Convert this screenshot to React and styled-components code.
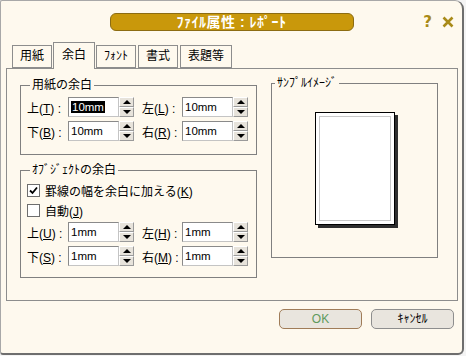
import React from "react";
import styled, { createGlobalStyle } from "styled-components";

const Global = createGlobalStyle`
  html, body { margin: 0; padding: 0; background: #f4f4f4; }
  body { font-family: "Liberation Sans", "Noto Sans CJK JP", sans-serif; font-size: 12px; color: #000; }
`;

const Window = styled.div`
  box-sizing: border-box;
  width: 464px;
  height: 355px;
  background: #fef9ee;
  border-top: 1px solid #a8a8a8;
  border-left: 1px solid #a8a8a8;
  border-right: 2px solid #6e6e6e;
  border-bottom: 2px solid #6e6e6e;
  border-radius: 2px 9px 6px 3px;
  display: flex;
  flex-direction: column;
`;

const TitleBar = styled.div`
  display: grid;
  grid-template-columns: 1fr 244px 1fr;
  align-items: center;
  height: 41px;
`;

const TitlePill = styled.div`
  grid-column: 2;
  box-sizing: border-box;
  height: 18px;
  margin-top: 1px;
  border: 1px solid #8c6c12;
  border-radius: 6px;
  background: #c9980b;
  color: #fff;
  font-weight: bold;
  font-size: 14px;
  line-height: 16px;
  text-align: center;
  letter-spacing: 0.5px;
`;

const TitleIcons = styled.div`
  justify-self: end;
  display: flex;
  align-items: center;
  gap: 10px;
  margin-right: 8px;
  margin-top: 1px;
`;

const Help = styled.span`
  font-family: "DejaVu Sans", sans-serif;
  font-weight: bold;
  font-size: 15px;
  color: #a88a18;
  line-height: 16px;
`;

const TabRow = styled.div`
  display: flex;
  align-items: flex-end;
  gap: 2px;
  height: 26px;
  padding-left: 11px;
  position: relative;
  z-index: 1;
`;

const Tab = styled.div`
  box-sizing: border-box;
  height: ${(p) => (p.active ? "27px" : "23px")};
  padding: 0 ${(p) => (p.active ? "8px" : "7px")};
  margin: 0 ${(p) => (p.active ? "-1px" : "0")};
  margin-bottom: ${(p) => (p.active ? "-1px" : "0")};
  border: 1px solid #8d8d8d;
  border-bottom: ${(p) => (p.active ? "none" : "1px solid #8d8d8d")};
  background: #fef9ee;
  line-height: ${(p) => (p.active ? "24px" : "21px")};
  font-size: 12px;
`;

const Panel = styled.div`
  box-sizing: border-box;
  margin-left: 5px;
  width: 452px;
  height: 233px;
  border: 1px solid #8d8d8d;
  display: grid;
  grid-template-columns: 237px 167px;
  column-gap: 14px;
  align-items: start;
  padding: 7px 0 0 13px;
`;

const LeftCol = styled.div`
  display: flex;
  flex-direction: column;
  gap: 8px;
  margin-top: 2px;
`;

const Group = styled.fieldset`
  box-sizing: border-box;
  margin: 0;
  min-width: 0;
  border: 1px solid #808080;
  padding: 5px 0 ${(p) => p.pb || 13}px 6px;
  display: flex;
  flex-direction: column;
  gap: 4px;
`;

const Legend = styled.legend`
  padding: 0 2px;
  margin-left: 3px;
  font-size: 12px;
  line-height: 14px;
`;

const SpinRow = styled.div`
  display: grid;
  grid-template-columns: 41px 51px 15px 48px 51px 15px;
  align-items: center;
  height: 20px;
`;

const Label = styled.span`
  font-size: 12px;
  white-space: nowrap;
  padding-left: ${(p) => (p.second ? "8px" : "0")};
`;

const Key = styled.span`
  font-family: "Liberation Sans", sans-serif;
  u { text-decoration: underline; }
`;

const Field = styled.div`
  box-sizing: border-box;
  height: 20px;
  background: #fff;
  border: 1px solid #8a8a8a;
  border-right-color: #c4c4c4;
  border-bottom-color: #c4c4c4;
  font-size: 11.5px;
  line-height: 18px;
  padding-left: 2px;
`;

const Sel = styled.span`
  background: #000;
  color: #fff;
  padding: 0 1px;
`;

const Spinner = styled.div`
  display: flex;
  flex-direction: column;
  height: 20px;
`;

const SpinBtn = styled.div`
  box-sizing: border-box;
  height: 10px;
  background: #e7e3db;
  border: 1px solid #fff;
  border-right-color: #9a9a9a;
  border-bottom-color: #9a9a9a;
  display: flex;
  align-items: center;
  justify-content: center;
  &::after {
    content: "";
    width: 0;
    height: 0;
    border-left: 4px solid transparent;
    border-right: 4px solid transparent;
    ${(p) => (p.down ? "border-top: 4px solid #000;" : "border-bottom: 4px solid #000;")}
  }
`;

const CheckRow = styled.label`
  display: flex;
  align-items: center;
  gap: 5px;
  height: 16px;
  font-size: 12px;
`;

const Box = styled.span`
  box-sizing: border-box;
  width: 13px;
  height: 13px;
  background: #fff;
  border: 1px solid #6e6e6e;
  display: flex;
  align-items: center;
  justify-content: center;
`;

const SampleGroup = styled(Group)`
  height: 182px;
  padding: 0;
`;

const PreviewArea = styled.div`
  flex: 1;
  display: flex;
  align-items: center;
  justify-content: center;
  padding-bottom: 10px;
`;

const Page = styled.div`
  box-sizing: border-box;
  width: 80px;
  height: 113px;
  background: #fff;
  border: 1px solid #000;
  box-shadow: 3px 3px 0 #2e2e2e;
  padding: 3px;
`;

const PageInner = styled.div`
  box-sizing: border-box;
  height: 100%;
  border: 1px solid #c8c8c8;
`;

const ButtonRow = styled.div`
  display: flex;
  justify-content: flex-end;
  gap: 9px;
  margin-top: 8px;
  padding-right: 8px;
`;

const Button = styled.div`
  box-sizing: border-box;
  width: 83px;
  height: 20px;
  border-radius: 5px;
  background: #e9e5de;
  border: 1px solid ${(p) => (p.primary ? "#a07c58" : "#8e8e8e")};
  color: ${(p) => (p.primary ? "#5f9a5c" : "#000")};
  font-size: 12px;
  line-height: 18px;
  text-align: center;
`;

function Spin() {
  return (
    <Spinner>
      <SpinBtn />
      <SpinBtn down />
    </Spinner>
  );
}

function Access({ k }) {
  return (
    <Key>
      (<u>{k}</u>)
    </Key>
  );
}

function Row({ l1, k1, v1, l2, k2, v2, selected }) {
  return (
    <SpinRow>
      <Label>
        {l1}
        <Access k={k1} /> :
      </Label>
      <Field>{selected ? <Sel>{v1}</Sel> : v1}</Field>
      <Spin />
      <Label second>
        {l2}
        <Access k={k2} /> :
      </Label>
      <Field>{v2}</Field>
      <Spin />
    </SpinRow>
  );
}

export default function App() {
  return (
    <>
      <Global />
      <Window>
        <TitleBar>
          <TitlePill>ﾌｧｲﾙ属性 : ﾚﾎﾟｰﾄ</TitlePill>
          <TitleIcons>
            <Help>?</Help>
            <svg width="12" height="12" viewBox="0 0 12 12">
              <path d="M1.5 1.5 L10.5 10.5 M10.5 1.5 L1.5 10.5" stroke="#a88a18" strokeWidth="2.6" />
            </svg>
          </TitleIcons>
        </TitleBar>
        <TabRow>
          <Tab>用紙</Tab>
          <Tab active>余白</Tab>
          <Tab>ﾌｫﾝﾄ</Tab>
          <Tab>書式</Tab>
          <Tab>表題等</Tab>
        </TabRow>
        <Panel>
          <LeftCol>
            <Group>
              <Legend>用紙の余白</Legend>
              <Row l1="上" k1="T" v1="10mm" l2="左" k2="L" v2="10mm" selected />
              <Row l1="下" k1="B" v1="10mm" l2="右" k2="R" v2="10mm" />
            </Group>
            <Group pb={11}>
              <Legend>ｵﾌﾞｼﾞｪｸﾄの余白</Legend>
              <CheckRow>
                <Box>
                  <svg width="9" height="9" viewBox="0 0 9 9">
                    <path d="M1 4.5 L3.5 7 L8 1.5" stroke="#000" strokeWidth="1.8" fill="none" />
                  </svg>
                </Box>
                <span>
                  罫線の幅を余白に加える
                  <Access k="K" />
                </span>
              </CheckRow>
              <CheckRow>
                <Box />
                <span>
                  自動
                  <Access k="J" />
                </span>
              </CheckRow>
              <Row l1="上" k1="U" v1="1mm" l2="左" k2="H" v2="1mm" />
              <Row l1="下" k1="S" v1="1mm" l2="右" k2="M" v2="1mm" />
            </Group>
          </LeftCol>
          <SampleGroup>
            <Legend>ｻﾝﾌﾟﾙｲﾒｰｼﾞ</Legend>
            <PreviewArea>
              <Page>
                <PageInner />
              </Page>
            </PreviewArea>
          </SampleGroup>
        </Panel>
        <ButtonRow>
          <Button primary>OK</Button>
          <Button>ｷｬﾝｾﾙ</Button>
        </ButtonRow>
      </Window>
    </>
  );
}
